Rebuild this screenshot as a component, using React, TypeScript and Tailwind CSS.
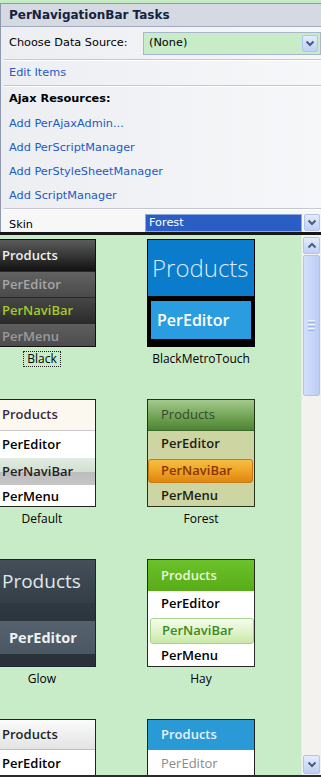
import React from 'react'

function Chevron({ up = false }: { up?: boolean }) {
  return (
    <svg width="10" height="7" viewBox="0 0 10 7" className="block">
      <path
        d={up ? 'M1.5 5.5 L5 2 L8.5 5.5' : 'M1.5 1.5 L5 5 L8.5 1.5'}
        fill="none"
        stroke="#4a5c80"
        strokeWidth="2"
      />
    </svg>
  )
}

function DropButton({ up = false, className = '' }: { up?: boolean; className?: string }) {
  return (
    <div
      className={`flex h-[17px] w-[16px] shrink-0 items-center justify-center rounded-[2px] border border-[#b3c3ea] bg-[linear-gradient(#e4ecfd,#bfd0f6)] ${className}`}
    >
      <Chevron up={up} />
    </div>
  )
}

function Separator() {
  return (
    <div className="ml-[3px] flex flex-col">
      <div className="h-px bg-[#c3c7cf]" />
      <div className="h-px bg-white" />
    </div>
  )
}

function LinkRow({ children }: { children: React.ReactNode }) {
  return <div className="flex h-[24px] items-center pl-[8px] text-[#2459c3]">{children}</div>
}

function BlackSkin() {
  return (
    <div className="flex h-[108px] w-[108px] flex-col overflow-hidden border border-[#111] bg-[#3a3a3a] text-[13px] font-semibold">
      <div className="flex h-[31px] shrink-0 items-center pl-[13px] text-[#f0f0f0] bg-[linear-gradient(#5c5c5c,#333_55%,#111)]">
        Products
      </div>
      <div className="flex h-[26px] shrink-0 items-center border-t border-[#2a2a2a] pl-[13px] text-[#a6a6a6] bg-[linear-gradient(#626262,#4a4a4a)]">
        PerEditor
      </div>
      <div className="flex h-[26px] shrink-0 items-center border-t border-[#2a2a2a] pl-[13px] text-[#a3cb2a] bg-[linear-gradient(#474747,#2b2b2b)]">
        PerNaviBar
      </div>
      <div className="flex h-[26px] shrink-0 items-center border-t border-[#2a2a2a] pl-[13px] text-[#9a9a9a] bg-[linear-gradient(#5e5e5e,#4a4a4a)]">
        PerMenu
      </div>
    </div>
  )
}

function MetroSkin() {
  return (
    <div className="flex h-[108px] w-[108px] flex-col bg-black p-px">
      <div className="flex h-[56px] items-center pl-[4px] text-[24px] font-light text-[#dcebfa] bg-[#0b7bcc]">
        Products
      </div>
      <div className="mx-[3px] mt-[5px] flex h-[38px] items-center pl-[6px] text-[16px] font-semibold text-white bg-[#2a9de0]">
        PerEditor
      </div>
    </div>
  )
}

function DefaultSkin() {
  return (
    <div className="flex h-[108px] w-[108px] flex-col overflow-hidden border border-[#222] bg-white text-[13px] font-semibold">
      <div className="flex h-[31px] shrink-0 items-center border-b border-[#c9c9c9] pl-[13px] text-[#3a2a3e] bg-[#fcf8f0]">
        Products
      </div>
      <div className="flex h-[27px] shrink-0 items-center pl-[13px] text-black">PerEditor</div>
      <div className="flex h-[27px] shrink-0 items-center pl-[13px] text-[#222] bg-[linear-gradient(#e2ece2,#d3dfd3_50%,#bcbcbc_52%,#c6c6c6)]">
        PerNaviBar
      </div>
      <div className="flex h-[24px] shrink-0 items-center pl-[13px] text-black">PerMenu</div>
    </div>
  )
}

function ForestSkin() {
  return (
    <div className="flex h-[108px] w-[108px] flex-col overflow-hidden border border-[#26331a] bg-[#cdd5a2] text-[13px] font-semibold">
      <div className="flex h-[31px] shrink-0 items-center border-b border-[#3f6a2a] pl-[13px] font-medium text-[#37492a] bg-[linear-gradient(#a4c98c,#75a85a_50%,#4d8433)]">
        Products
      </div>
      <div className="flex h-[26px] shrink-0 items-center pl-[13px] text-[#1d1d10]">PerEditor</div>
      <div className="flex h-[27px] shrink-0 items-center pr-px">
        <div className="flex h-[24px] w-full items-center rounded-[3px] border border-[#c67b12] pl-[12px] text-[#8a3400] bg-[linear-gradient(#f7bf44,#eea426_50%,#de8610)]">
          PerNaviBar
        </div>
      </div>
      <div className="flex h-[24px] shrink-0 items-center pl-[13px] text-[#1d1d10]">PerMenu</div>
    </div>
  )
}

function GlowSkin() {
  return (
    <div className="flex h-[108px] w-[108px] flex-col overflow-hidden border border-[#1e262c] bg-[#2c353d]">
      <div className="flex h-[43px] shrink-0 items-center pl-[13px] text-[19px] text-[#e2e7eb] bg-[linear-gradient(#444f59,#343e47)]">
        Products
      </div>
      <div className="h-[18px] shrink-0 bg-[linear-gradient(#2f3941,#2c353d)]" />
      <div className="flex h-[33px] shrink-0 items-center pl-[20px] text-[14.5px] font-bold text-[#eef1f3] bg-[linear-gradient(#56636e,#4a5661)]">
        PerEditor
      </div>
      <div className="h-[12px] shrink-0 bg-[#2a3239]" />
    </div>
  )
}

function HaySkin() {
  return (
    <div className="flex h-[108px] w-[108px] flex-col overflow-hidden border border-[#2a2a2a] bg-white text-[13px] font-semibold">
      <div className="flex h-[31px] shrink-0 items-center pl-[13px] text-[#eaf7dc] bg-[linear-gradient(#6cc22a,#57ac18)]">
        Products
      </div>
      <div className="flex h-[26px] shrink-0 items-center pl-[13px] text-black">PerEditor</div>
      <div className="flex h-[28px] shrink-0 items-center pl-[2px]">
        <div className="flex h-[26px] w-full items-center rounded-[3px] border border-[#a6d48c] pl-[11px] text-[#3a8a1c] bg-[linear-gradient(#f6fced,#e1f3cc_50%,#c9e8a8)]">
          PerNaviBar
        </div>
      </div>
      <div className="flex h-[22px] shrink-0 items-center pl-[13px] text-black">PerMenu</div>
    </div>
  )
}

function SilkSkin() {
  return (
    <div className="flex h-[58px] w-[108px] flex-col overflow-hidden border-x border-t border-[#222] bg-white text-[13px] font-semibold">
      <div className="flex h-[30px] shrink-0 items-center border-b border-[#bdbdbd] pl-[13px] text-[#1e1e1e] bg-[linear-gradient(#fbfbfb,#e3e3e3)]">
        Products
      </div>
      <div className="flex h-[27px] shrink-0 items-center pl-[13px] text-black">PerEditor</div>
    </div>
  )
}

function SkySkin() {
  return (
    <div className="flex h-[58px] w-[108px] flex-col overflow-hidden border-x border-t border-[#222] bg-white text-[13px] font-semibold">
      <div className="flex h-[30px] shrink-0 items-center pl-[13px] text-[#e6f4fd] bg-[#2a9ad7]">Products</div>
      <div className="flex h-[27px] shrink-0 items-center pl-[13px] font-normal text-[#8a8a8a]">PerEditor</div>
    </div>
  )
}

function SkinCell({ name, focused = false, children }: { name?: string; focused?: boolean; children: React.ReactNode }) {
  return (
    <div className="flex flex-col items-center">
      {children}
      {name && (
        <div
          className={`mt-[4px] border px-[3px] text-[12px] leading-[14px] text-black ${focused ? 'border-dotted border-[#222]' : 'border-transparent'}`}
        >
          {name}
        </div>
      )}
    </div>
  )
}

export default function App() {
  return (
    <div className="flex h-[777px] w-[321px] flex-col overflow-hidden bg-[#c8ecc8] font-['DejaVu_Sans',Tahoma,sans-serif] text-[11.3px] text-black">
      <div className="h-[3px] shrink-0 bg-[#c6e9c6]" />

      <div className="shrink-0 border-l border-t border-[#8d99af] bg-[linear-gradient(90deg,#eceef2,#f6f7f9)]">
        <div className="flex h-[23px] items-center border-b border-[#a2abbb] bg-[#d4d9e2] pl-[8px] text-[12px] font-bold text-[#16223e]">
          PerNavigationBar Tasks
        </div>

        <div className="flex h-[32px] items-center">
          <div className="w-[142px] pl-[8px]">Choose Data Source:</div>
          <div className="flex h-[23px] flex-1 items-center justify-between border border-[#a9b5c9] bg-[#c8ecc8] pl-[5px] pr-[2px]">
            <span>(None)</span>
            <DropButton />
          </div>
        </div>

        <Separator />
        <LinkRow>Edit Items</LinkRow>
        <Separator />
        <div className="flex h-[25px] items-center pl-[8px] font-bold">Ajax Resources:</div>
        <LinkRow>Add PerAjaxAdmin...</LinkRow>
        <LinkRow>Add PerScriptManager</LinkRow>
        <LinkRow>Add PerStyleSheetManager</LinkRow>
        <LinkRow>Add ScriptManager</LinkRow>
        <Separator />

        <div className="flex h-[22px] items-end bg-[#f7f7f8]">
          <div className="w-[144px] pl-[8px] leading-[14px]">Skin</div>
          <div className="flex h-[18px] w-[157px] items-center border border-[#8fa8dc] bg-[#2b5ec4] pl-[3px] text-white">
            Forest
          </div>
          <DropButton className="mb-px ml-[2px]" />
        </div>
      </div>

      <div className="h-[3px] shrink-0 bg-[#161616]" />

      <div className="flex h-[540px] shrink-0">
        <div className="flex-1 overflow-hidden bg-[#c8ecc8] pt-[4px] font-['Open_Sans',sans-serif]">
          <div className="ml-[-12px] grid grid-cols-[108px_108px] gap-x-[51px] gap-y-[32px]">
            <SkinCell name="Black" focused>
              <BlackSkin />
            </SkinCell>
            <SkinCell name="BlackMetroTouch">
              <MetroSkin />
            </SkinCell>
            <SkinCell name="Default">
              <DefaultSkin />
            </SkinCell>
            <SkinCell name="Forest">
              <ForestSkin />
            </SkinCell>
            <SkinCell name="Glow">
              <GlowSkin />
            </SkinCell>
            <SkinCell name="Hay">
              <HaySkin />
            </SkinCell>
            <SkinCell>
              <SilkSkin />
            </SkinCell>
            <SkinCell>
              <SkySkin />
            </SkinCell>
          </div>
        </div>

        <div className="flex w-[20px] shrink-0 flex-col items-center border-l border-[#e9e9e4] bg-[#f3f2ee] pt-[2px] pb-px">
          <DropButton up className="h-[17px] w-[17px]" />
          <div className="mt-px flex h-[141px] w-[17px] items-center justify-center rounded-[2px] border border-[#b3c4ec] bg-[linear-gradient(90deg,#d3dffc,#bccdf6)]">
            <div className="flex w-[7px] flex-col gap-px">
              <div className="h-px bg-[#eef3fe]" />
              <div className="h-px bg-[#9fb3e2]" />
              <div className="h-px bg-[#eef3fe]" />
              <div className="h-px bg-[#9fb3e2]" />
              <div className="h-px bg-[#eef3fe]" />
              <div className="h-px bg-[#9fb3e2]" />
            </div>
          </div>
          <div className="flex-1" />
          <DropButton className="h-[19px] w-[17px]" />
        </div>
      </div>

      <div className="h-[2px] shrink-0 bg-[#2a2a2a]" />
    </div>
  )
}
